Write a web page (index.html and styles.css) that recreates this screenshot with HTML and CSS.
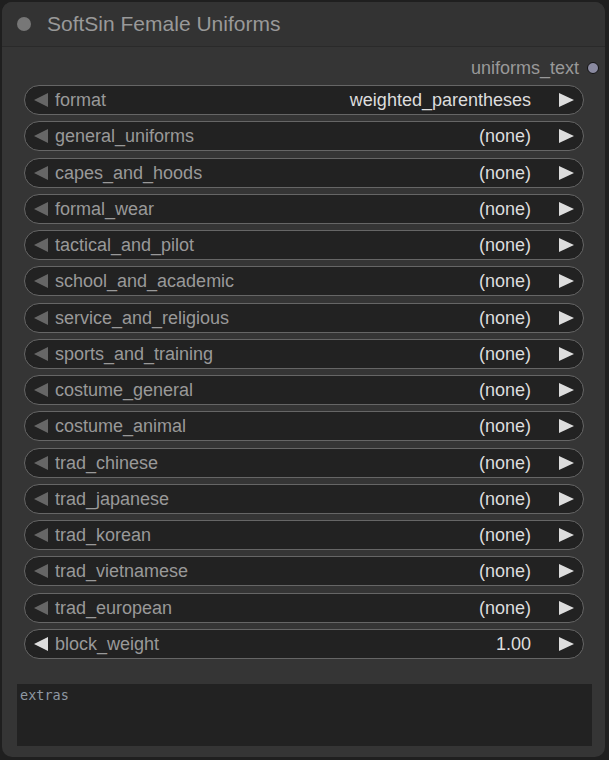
FILE: index.html
```html
<!DOCTYPE html>
<html>
<head>
<meta charset="utf-8">
<link rel="stylesheet" href="styles.css">
</head>
<body>
<div class="node">
  <div class="title">
    <span class="title-dot"></span>
    <span class="title-text">SoftSin Female Uniforms</span>
  </div>
  <div class="body">
    <div class="output-row">
      <span class="output-label">uniforms_text</span>
      <span class="output-dot"></span>
    </div>
    <div class="widgets">
      <div class="widget"><span class="arrow left dim"></span><span class="label">format</span><span class="value">weighted_parentheses</span><span class="arrow right"></span></div>
      <div class="widget"><span class="arrow left dim"></span><span class="label">general_uniforms</span><span class="value">(none)</span><span class="arrow right"></span></div>
      <div class="widget"><span class="arrow left dim"></span><span class="label">capes_and_hoods</span><span class="value">(none)</span><span class="arrow right"></span></div>
      <div class="widget"><span class="arrow left dim"></span><span class="label">formal_wear</span><span class="value">(none)</span><span class="arrow right"></span></div>
      <div class="widget"><span class="arrow left dim"></span><span class="label">tactical_and_pilot</span><span class="value">(none)</span><span class="arrow right"></span></div>
      <div class="widget"><span class="arrow left dim"></span><span class="label">school_and_academic</span><span class="value">(none)</span><span class="arrow right"></span></div>
      <div class="widget"><span class="arrow left dim"></span><span class="label">service_and_religious</span><span class="value">(none)</span><span class="arrow right"></span></div>
      <div class="widget"><span class="arrow left dim"></span><span class="label">sports_and_training</span><span class="value">(none)</span><span class="arrow right"></span></div>
      <div class="widget"><span class="arrow left dim"></span><span class="label">costume_general</span><span class="value">(none)</span><span class="arrow right"></span></div>
      <div class="widget"><span class="arrow left dim"></span><span class="label">costume_animal</span><span class="value">(none)</span><span class="arrow right"></span></div>
      <div class="widget"><span class="arrow left dim"></span><span class="label">trad_chinese</span><span class="value">(none)</span><span class="arrow right"></span></div>
      <div class="widget"><span class="arrow left dim"></span><span class="label">trad_japanese</span><span class="value">(none)</span><span class="arrow right"></span></div>
      <div class="widget"><span class="arrow left dim"></span><span class="label">trad_korean</span><span class="value">(none)</span><span class="arrow right"></span></div>
      <div class="widget"><span class="arrow left dim"></span><span class="label">trad_vietnamese</span><span class="value">(none)</span><span class="arrow right"></span></div>
      <div class="widget"><span class="arrow left dim"></span><span class="label">trad_european</span><span class="value">(none)</span><span class="arrow right"></span></div>
      <div class="widget"><span class="arrow left"></span><span class="label">block_weight</span><span class="value">1.00</span><span class="arrow right"></span></div>
    </div>
    <div class="textarea">extras</div>
  </div>
</div>
</body>
</html>
```
FILE: styles.css
```css
html, body {
  margin: 0;
  padding: 0;
}
body {
  width: 609px;
  height: 760px;
  background: #1f1f1f;
  overflow: hidden;
  font-family: "Liberation Sans", Arial, sans-serif;
}
.node {
  margin: 2px 0 0 2px;
  width: 603px;
  height: 755px;
  background: #353535;
  border-radius: 10px;
  overflow: hidden;
  display: flex;
  flex-direction: column;
}
.title {
  height: 45px;
  flex: none;
  background: #333333;
  border-bottom: 1px solid #2a2a2a;
  display: flex;
  align-items: center;
  padding-left: 15px;
  padding-bottom: 1px;
  box-sizing: border-box;
}
.title-dot {
  width: 14px;
  height: 14px;
  border-radius: 50%;
  background: #777777;
}
.title-text {
  margin-left: 16px;
  font-size: 21px;
  color: #999999;
  line-height: 1;
}
.body {
  flex: 1;
  display: flex;
  flex-direction: column;
}
.output-row {
  height: 20px;
  margin-top: 11px;
  display: flex;
  align-items: center;
  justify-content: flex-end;
  padding-right: 6px;
}
.output-label {
  font-size: 18px;
  color: #999999;
  line-height: 1;
}
.output-dot {
  width: 10px;
  height: 10px;
  border-radius: 50%;
  background: #8a8aa0;
  border: 1.5px solid #111;
  margin-left: 8px;
}
.widgets {
  margin: 7px 0 0 22px;
  width: 560px;
  display: flex;
  flex-direction: column;
  gap: 6.27px;
}
.widget {
  height: 30px;
  box-sizing: border-box;
  border: 1.5px solid #666666;
  border-radius: 15px;
  background: #222222;
  display: flex;
  align-items: center;
  padding: 0 9px 0 9px;
  font-size: 18px;
  line-height: 1;
}
.arrow {
  width: 0;
  height: 0;
  border-top: 7px solid transparent;
  border-bottom: 7px solid transparent;
  flex: none;
}
.arrow.left {
  border-right: 14px solid #dddddd;
}
.arrow.left.dim {
  border-right-color: #666666;
}
.arrow.right {
  border-left: 15px solid #dddddd;
}
.label {
  margin-left: 7px;
  color: #999999;
  flex: 1;
  white-space: nowrap;
}
.value {
  color: #dddddd;
  margin-right: 28px;
  white-space: nowrap;
}
.textarea {
  margin: 25px 0 0 15px;
  width: 575px;
  height: 62px;
  background: #222222;
  box-sizing: border-box;
  padding: 4px 3px;
  font-family: "DejaVu Sans Mono", monospace;
  font-size: 13.5px;
  color: #8f99a3;
  line-height: 14px;
}
```
